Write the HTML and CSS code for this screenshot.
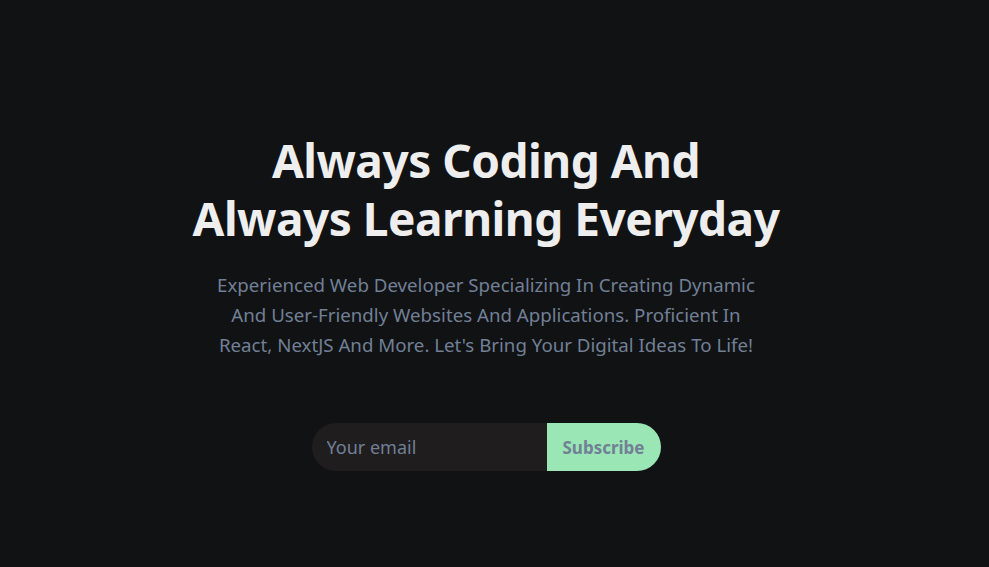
FILE: index.html
```html
<!DOCTYPE html>
<html lang="en">
<head>
<meta charset="utf-8">
<title>Always Coding</title>
<link rel="stylesheet" href="styles.css">
</head>
<body>
<main class="hero">
  <h1 class="hero-title">Always Coding And<br>Always Learning Everyday</h1>
  <p class="hero-text">Experienced Web Developer Specializing In Creating Dynamic And User-Friendly Websites And Applications. Proficient In React, NextJS And More. Let's Bring Your Digital Ideas To Life!</p>
  <form class="subscribe" onsubmit="return false;">
    <input class="subscribe-input" type="email" placeholder="Your email">
    <button class="subscribe-btn" type="submit">Subscribe</button>
  </form>
</main>
</body>
</html>
```
FILE: styles.css
```css
* { box-sizing: border-box; }
html, body {
  margin: 0;
  padding: 0;
  background: #111214;
  height: 100%;
}
body {
  font-family: "Noto Sans", "Open Sans", sans-serif;
  color: #eeeeee;
}
.hero {
  display: flex;
  flex-direction: column;
  align-items: center;
  padding-top: 131px;
  padding-right: 17px;
}
.hero-title {
  margin: 0;
  font-size: 46px;
  line-height: 58px;
  font-weight: 700;
  text-align: center;
  color: #eeeeee;
  letter-spacing: -0.5px;
}
.hero-text {
  margin: 23px 0 0;
  width: 556px;
  font-size: 18.7px;
  line-height: 30px;
  text-align: center;
  color: #718096;
}
.subscribe {
  display: flex;
  margin-top: 63px;
  height: 48px;
}
.subscribe-input {
  width: 235px;
  height: 48px;
  border: none;
  outline: none;
  background: #1f1d1e;
  border-radius: 24px 0 0 24px;
  padding: 0 15px;
  font-family: inherit;
  font-size: 18px;
  color: #cbd5e0;
}
.subscribe-input::placeholder { color: #718096; }
.subscribe-btn {
  width: 114px;
  height: 48px;
  border: none;
  background: #9ae6b4;
  border-radius: 0 24px 24px 0;
  font-family: inherit;
  font-size: 17px;
  font-weight: 700;
  color: #718096;
  padding: 0;
  cursor: pointer;
}
```
